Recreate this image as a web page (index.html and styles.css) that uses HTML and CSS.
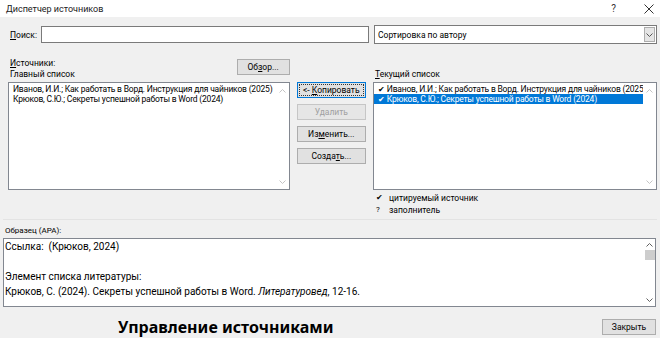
FILE: index.html
```html
<!DOCTYPE html>
<html lang="ru">
    <head>
        <meta charset="UTF-8" />
        <meta name="viewport" content="width=device-width, initial-scale=1.0" />
        <link rel="stylesheet" href="styles.css">
        <title>Диспетчер источников</title>
    </head>
    <body>
        <div class="dialog">
            <!-- заголовок окна -->
            <div class="titlebar">
                <span class="title">Диспетчер источников</span>
                <span class="help">?</span>
                <svg class="close" width="10" height="10" viewBox="0 0 10 10">
                    <path d="M0.5 0.5 L9.5 9.5 M9.5 0.5 L0.5 9.5" stroke="#333" stroke-width="1" fill="none" />
                </svg>
            </div>

            <div class="content">
                <!-- поиск и сортировка -->
                <div class="search-row">
                    <span class="search-label"><u>П</u>оиск:</span>
                    <div class="search-input"></div>
                    <div class="sort-select">
                        <span class="sort-value">Сортировка по автору</span>
                        <span class="sort-arrow">
                            <svg width="7" height="4" viewBox="0 0 7 4">
                                <path d="M0.5 0.5 L3.5 3.5 L6.5 0.5" stroke="#555" stroke-width="1" fill="none" />
                            </svg>
                        </span>
                    </div>
                </div>

                <div class="lists">
                    <!-- главный список -->
                    <div class="list-col">
                        <div class="col-head">
                            <div class="col-labels">
                                <div><u>И</u>сточники:</div>
                                <div>Главный список</div>
                            </div>
                            <button class="btn btn-browse">Об<u>з</u>ор...</button>
                        </div>
                        <div class="listbox">
                            <div class="list-items">
                                <div class="list-item">Иванов, И.И.; Как работать в Ворд. Инструкция для чайников (2025)</div>
                                <div class="list-item">Крюков, С.Ю.; Секреты успешной работы в Word (2024)</div>
                            </div>
                            <div class="list-scroll">
                                <svg width="7" height="4" viewBox="0 0 7 4"><path d="M0.5 3.5 L3.5 0.5 L6.5 3.5" stroke="#c4c4c4" fill="none" /></svg>
                                <svg width="7" height="4" viewBox="0 0 7 4"><path d="M0.5 0.5 L3.5 3.5 L6.5 0.5" stroke="#c4c4c4" fill="none" /></svg>
                            </div>
                        </div>
                    </div>

                    <!-- кнопки действий -->
                    <div class="actions">
                        <button class="btn btn-default">&lt;- <u>К</u>опировать</button>
                        <button class="btn" disabled>Удалить</button>
                        <button class="btn">Из<u>м</u>енить...</button>
                        <button class="btn">Созда<u>т</u>ь...</button>
                    </div>

                    <!-- текущий список -->
                    <div class="list-col">
                        <div class="col-head">
                            <div class="col-labels">
                                <div><u>Т</u>екущий список</div>
                            </div>
                        </div>
                        <div class="listbox">
                            <div class="list-items">
                                <div class="list-item"><span class="mark">✔</span>Иванов, И.И.; Как работать в Ворд. Инструкция для чайников (2025)</div>
                                <div class="list-item selected"><span class="mark">✔</span>Крюков, С.Ю.; Секреты успешной работы в Word (2024)</div>
                            </div>
                            <div class="list-scroll">
                                <svg width="7" height="4" viewBox="0 0 7 4"><path d="M0.5 3.5 L3.5 0.5 L6.5 3.5" stroke="#c4c4c4" fill="none" /></svg>
                                <svg width="7" height="4" viewBox="0 0 7 4"><path d="M0.5 0.5 L3.5 3.5 L6.5 0.5" stroke="#c4c4c4" fill="none" /></svg>
                            </div>
                        </div>
                        <div class="legend">
                            <div class="legend-row"><span class="legend-mark">✔</span>цитируемый источник</div>
                            <div class="legend-row"><span class="legend-mark">?</span>заполнитель</div>
                        </div>
                    </div>
                </div>

                <div class="separator"></div>

                <!-- образец -->
                <div class="sample-label">Образец (APA):</div>
                <div class="sample">
                    <div class="sample-text">
                        <div>Ссылка:&nbsp; (Крюков, 2024)</div>
                        <div>&nbsp;</div>
                        <div>Элемент списка литературы:</div>
                        <div>Крюков, С. (2024). Секреты успешной работы в Word. <i>Литературовед</i>, 12-16.</div>
                    </div>
                    <div class="sample-scroll">
                        <svg width="7" height="4" viewBox="0 0 7 4"><path d="M0.5 3.5 L3.5 0.5 L6.5 3.5" stroke="#606060" fill="none" /></svg>
                        <div class="thumb"></div>
                        <div class="scroll-fill"></div>
                        <svg width="7" height="4" viewBox="0 0 7 4"><path d="M0.5 0.5 L3.5 3.5 L6.5 0.5" stroke="#606060" fill="none" /></svg>
                    </div>
                </div>

                <div class="footer">
                    <span class="caption">Управление источниками</span>
                    <button class="btn btn-close">Закрыть</button>
                </div>
            </div>
        </div>
    </body>
</html>
```

FILE: styles.css
```css
/* базовые стили */
html,
body {
    margin: 0;
    padding: 0;
    width: 100%;
    height: 100%;
    overflow: hidden;
    background: #f0f0f0;
    font-family: Roboto, "Noto Sans", sans-serif;
    font-size: 8.5px;
    color: #000;
}

.dialog {
    width: 660px;
    height: 338px;
    display: flex;
    flex-direction: column;
}

/* заголовок */
.titlebar {
    height: 19px;
    background: #fff;
    display: flex;
    align-items: center;
    padding: 0 5px 0 6px;
}

.title {
    flex: 1;
    font-size: 9px;
    color: #222;
}

.help {
    font-size: 10px;
    color: #333;
    margin-right: 28px;
}

.close {
    margin-right: 1px;
}

.content {
    padding: 0 3px;
    display: flex;
    flex-direction: column;
}

/* поиск */
.search-row {
    margin-top: 8px;
    height: 19px;
    display: flex;
    align-items: center;
    padding-left: 7px;
}

.search-label {
    width: 31px;
}

.search-input {
    width: 326px;
    height: 15px;
    background: #fff;
    border: 1px solid #7a7a7a;
}

.sort-select {
    margin-left: 5px;
    width: 281px;
    height: 17px;
    background: #fff;
    border: 1px solid #7a7a7a;
    display: flex;
    align-items: center;
}

.sort-value {
    flex: 1;
    padding-left: 3px;
}

.sort-arrow {
    width: 11px;
    height: 15px;
    margin-right: 1px;
    background: #e5e5e5;
    border: 1px solid #adadad;
    box-sizing: border-box;
    display: flex;
    align-items: center;
    justify-content: center;
}

/* списки */
.lists {
    display: flex;
    padding-left: 5px;
    gap: 6px;
}

.list-col {
    width: 284px;
    display: flex;
    flex-direction: column;
}

.col-head {
    height: 38px;
    display: flex;
    justify-content: space-between;
    align-items: flex-end;
}

.col-labels {
    padding: 0 0 2px 2px;
    line-height: 11px;
}

.listbox {
    height: 106px;
    background: #fff;
    border: 1px solid #828790;
    display: flex;
}

.list-items {
    flex: 1;
    padding-top: 1px;
    overflow: hidden;
}

.list-item {
    height: 10px;
    line-height: 10px;
    padding-left: 4px;
    letter-spacing: -0.2px;
    white-space: nowrap;
    overflow: hidden;
}

.list-item.selected {
    background: #0078d7;
    color: #fff;
}

.mark {
    font-size: 8px;
    margin-right: 2px;
}

.list-scroll {
    width: 13px;
    display: flex;
    flex-direction: column;
    justify-content: space-between;
    align-items: center;
    padding: 6px 0 5px;
}

.actions {
    width: 70px;
    padding-top: 38px;
    display: flex;
    flex-direction: column;
    gap: 6px;
    margin: 0 1px;
}

/* кнопки */
.btn {
    height: 16px;
    padding: 0;
    font-family: inherit;
    font-size: 8.5px;
    line-height: 14px;
    white-space: nowrap;
    color: #000;
    background: #e1e1e1;
    border: 1px solid #adadad;
}

.btn:disabled {
    color: #a0a0a0;
    background: #e6e6e6;
    border-color: #c6c6c6;
}

.btn-default {
    border: 1px solid #0078d7;
    outline: 1px dotted #333;
    outline-offset: -3px;
}

.btn-browse {
    width: 53px;
    margin-bottom: 7px;
}

.legend {
    padding: 2px 0 0 3px;
}

.legend-row {
    height: 12px;
    line-height: 12px;
    display: flex;
}

.legend-mark {
    width: 13px;
    font-size: 8px;
}

.separator {
    margin-top: 3px;
    height: 1px;
    background: #e3e3e3;
}

/* образец */
.sample-label {
    margin-top: 4px;
    padding-left: 2px;
    font-size: 8px;
    line-height: 14px;
}

.sample {
    height: 67px;
    width: 651px;
    background: #fff;
    border: 1px solid #828790;
    display: flex;
}

.sample-text {
    flex: 1;
    padding-left: 1px;
    font-size: 10px;
    line-height: 15px;
}

.sample-scroll {
    width: 11px;
    display: flex;
    flex-direction: column;
    align-items: center;
    padding: 4px 0 4px;
    gap: 3px;
}

.thumb {
    width: 10px;
    height: 10px;
    background: #cdcdcd;
}

.scroll-fill {
    flex: 1;
}

.footer {
    margin-top: 9px;
    display: flex;
    align-items: center;
    justify-content: space-between;
    padding-left: 115px;
}

.caption {
    font-family: "Noto Sans", sans-serif;
    font-size: 16px;
    font-weight: bold;
}

.btn-close {
    width: 54px;
    margin-right: 1px;
}
```
